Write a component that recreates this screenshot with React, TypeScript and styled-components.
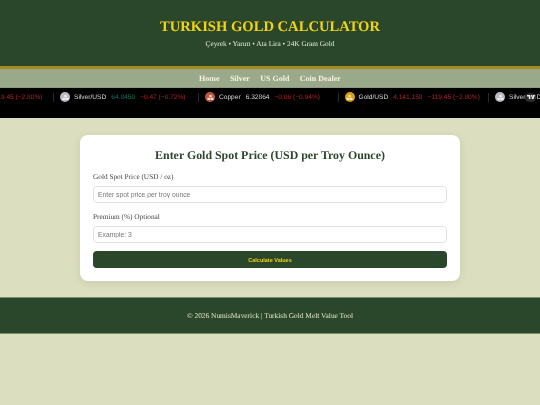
import React from "react";
import styled, { createGlobalStyle } from "styled-components";

const Global = createGlobalStyle`
  html, body { margin: 0; padding: 0; background: #dcdfbf; }
  * { box-sizing: border-box; }
  #root { font-family: "Liberation Serif", serif; }
`;
const Page = styled.div`
  width: 540px; height: 405px; overflow: hidden; background: #dcdfbf; filter: blur(0.3px);
  text-rendering: geometricPrecision;
`;
const Header = styled.header`
  height: 69px; background: #2b472b; border-bottom: 3px solid #a68a1e;
  display: flex; flex-direction: column; align-items: center; padding-top: 18px;
`;
const Title = styled.h1`
  margin: 0; font: 700 14.6px/18px "Liberation Serif", serif; color: #f0d312;
  white-space: nowrap;
`;
const Subtitle = styled.p`
  margin: 3px 0 0; font: 400 7.3px/9px "Liberation Serif", serif; color: #e8eadb; white-space: nowrap;
`;
const Nav = styled.nav`
  height: 18px; background: #9aa98a; display: flex; justify-content: center; align-items: center; gap: 10.4px;
  padding-top: 1px;
`;
const NavLink = styled.a`
  font: 700 8px/8px "Liberation Serif", serif; color: #f3f3e1; white-space: nowrap;
`;
const Ticker = styled.div`
  position: relative; height: 31px; background: #000; overflow: hidden;
  display: flex; align-items: flex-start;
  border-top: 1px solid #8d9a80;
`;
const Track = styled.div`display: flex; align-items: center; height: 18px; margin-left: -10px; flex: none;`;
const Item = styled.div<{ $w: number }>`
  width: ${(p) => p.$w}px; flex: none; display: flex; align-items: center;
  padding-left: 6px; height: 9px; border-left: 1px solid #2a2a2a;
  font: 400 6.6px/9px "Liberation Sans", Arial, sans-serif; white-space: nowrap;
  &:first-child { border-left: 0; padding-left: 0; justify-content: flex-end; padding-right: 10.5px; }
`;
const Sym = styled.span`color: #d8d8d8; margin-left: 4px;`;
const Val = styled.span<{ $c: string }>`color: ${(p) => p.$c}; margin-left: 5px;`;
const Coin = styled.span<{ $c: string }>`
  width: 10px; height: 10px; flex: none; border-radius: 50%; background: ${(p) => p.$c};
  display: flex; align-items: center; justify-content: center;
`;
const TvBadge = styled.div`
  position: absolute; left: 525px; top: 4.5px; width: 11px; height: 9px; border-radius: 4.5px;
  background: #2c2c2c; display: flex; align-items: center; justify-content: center;
`;
const Main = styled.main`padding: 17px 80px 16px;`;
const Card = styled.section`
  height: 146px; background: #fff; border-radius: 8px; padding: 13px 13px 0;
  box-shadow: 0 2px 8px rgba(0,0,0,.1);
`;
const CardTitle = styled.h2`
  margin: 0; text-align: center; font: 700 11.9px/14px "Liberation Serif", serif; color: #2b472b; white-space: nowrap;
`;
const Field = styled.div<{ $gap: number }>`margin-top: ${(p) => p.$gap}px;`;
const Label = styled.label`
  display: block; font: 400 7.3px/8px "Liberation Serif", serif; color: #444; margin-bottom: 5px;
`;
const Input = styled.input`
  display: block; width: 100%; height: 17px; padding: 0 4px; border: 1px solid #e2e2e2; border-radius: 4px;
  background: #fff; font: 400 6.75px "Liberation Sans", Arial, sans-serif; color: #333; outline: none;
  &::placeholder { color: #777; opacity: 1; }
`;
const Button = styled.button`
  display: block; width: 100%; height: 17px; margin-top: 8px; border: 0; border-radius: 4px; background: #2b472b;
  color: #f0d312; font: 700 5.5px "Liberation Sans", Arial, sans-serif; padding: 0;
`;
const Footer = styled.footer`
  height: 37px; background: #2b472b; border-top: 1px solid #7e8f6f; border-bottom: 1px solid #7e8f6f;
  display: flex; align-items: center; justify-content: center;
  font: 400 7.4px/8px "Liberation Serif", serif; color: #e4e6cc; white-space: nowrap;
`;

const BarsIcon = ({ c }: { c: string }) => (
  <svg width="7" height="7" viewBox="0 0 14 14">
    <rect x="4.5" y="2" width="5" height="4.5" rx="1" fill={c} />
    <rect x="1" y="7.5" width="5.5" height="4.5" rx="1" fill={c} />
    <rect x="7.5" y="7.5" width="5.5" height="4.5" rx="1" fill={c} />
  </svg>
);

const RED = "#b5202c";
const GREEN = "#0d7a62";

const quotes = [
  { w: 63, coin: "", ic: "", sym: "", price: "", pc: "", ch: "−119.45 (−2.80%)" },
  { w: 145, coin: "#b9b9c4", ic: "#eee", sym: "Silver/USD", price: "64.8450", pc: GREEN, ch: "−0.47 (−0.72%)" },
  { w: 139.5, coin: "#b8593c", ic: "#f3d8c8", sym: "Copper", price: "6.32864", pc: "#d8d8d8", ch: "−0.06 (−0.94%)" },
  { w: 150.5, coin: "#d9a010", ic: "#f8e6a0", sym: "Gold/USD", price: "4,141.158", pc: RED, ch: "−119.45 (−2.80%)" },
  { w: 145, coin: "#b9b9c4", ic: "#eee", sym: "Silver/USD", price: "64.8450", pc: GREEN, ch: "−0.47 (−0.72%)" },
];

export default function App() {
  return (
    <Page>
      <Global />
      <Header>
        <Title>TURKISH GOLD CALCULATOR</Title>
        <Subtitle>Çeyrek • Yarım • Ata Lira • 24K Gram Gold</Subtitle>
      </Header>
      <Nav>
        <NavLink>Home</NavLink>
        <NavLink>Silver</NavLink>
        <NavLink>US Gold</NavLink>
        <NavLink>Coin Dealer</NavLink>
      </Nav>
      <Ticker>
        <Track>
          {quotes.map((q, i) => (
            <Item key={i} $w={q.w}>
              {q.coin && <Coin $c={q.coin}><BarsIcon c={q.ic} /></Coin>}
              {q.sym && <Sym>{q.sym}</Sym>}
              {q.price && <Val $c={q.pc}>{q.price}</Val>}
              <Val $c={RED}>{q.ch}</Val>
            </Item>
          ))}
        </Track>
        <TvBadge>
          <svg width="8" height="4.5" viewBox="0 0 36 20" fill="#e8e8e8">
            <path d="M0 0h15v20H8V7H0z" />
            <circle cx="21" cy="4" r="4" />
            <path d="M27 0h9l-8 20h-9z" />
          </svg>
        </TvBadge>
      </Ticker>
      <Main>
        <Card>
          <CardTitle>Enter Gold Spot Price (USD per Troy Ounce)</CardTitle>
          <Field $gap={11}>
            <Label>Gold Spot Price (USD / oz)</Label>
            <Input placeholder="Enter spot price per troy ounce" />
          </Field>
          <Field $gap={10}>
            <Label>Premium (%) Optional</Label>
            <Input placeholder="Example: 3" />
          </Field>
          <Button>Calculate Values</Button>
        </Card>
      </Main>
      <Footer>© 2026 NumisMaverick | Turkish Gold Melt Value Tool</Footer>
    </Page>
  );
}
